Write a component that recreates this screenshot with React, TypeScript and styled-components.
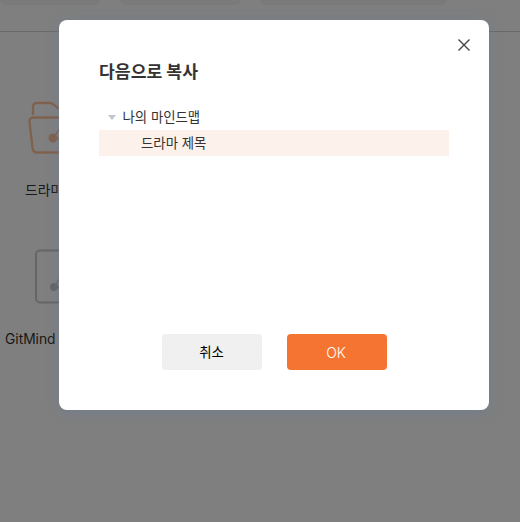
import React from "react";
import styled, { createGlobalStyle } from "styled-components";

const GlobalStyle = createGlobalStyle`
  * { box-sizing: border-box; }
  body { margin: 0; overflow: hidden; background: #fff; }
  button { font: inherit; border: 0; padding: 0; cursor: pointer; }
`;

const Screen = styled.div`
  position: relative;
  width: 520px;
  height: 522px;
  overflow: hidden;
  font-family: Inter, "Noto Sans CJK KR", sans-serif;
  font-size: 13.4px;
  color: #333;
`;

const Toolbar = styled.header`
  display: flex;
  height: 32px;
  border-bottom: 1px solid #d2d4da;
`;

const Chip = styled.div<{ $width: number; $gap: number }>`
  width: ${(p) => p.$width}px;
  height: 5px;
  margin-right: ${(p) => p.$gap}px;
  background: #f5f5f5;
  border-radius: 0 0 5px 5px;
`;

const Files = styled.main`
  display: flex;
  flex-direction: column;
  padding-top: 64px;
`;

const FileItem = styled.div`
  display: flex;
  flex-direction: column;
  width: 124px;
  height: 149px;
`;

const FileArt = styled.svg`
  display: block;
  width: 72px;
  height: 64px;
  margin-left: 26px;
  flex: none;
`;

const FileName = styled.span<{ $indent: number }>`
  margin-top: 20px;
  padding-left: ${(p) => p.$indent}px;
  font-size: 13.8px;
  line-height: 20px;
  white-space: nowrap;
`;

const Backdrop = styled.div`
  position: absolute;
  inset: 0;
  display: flex;
  align-items: flex-start;
  padding: 20px 0 0 59px;
  background: rgba(0, 0, 0, 0.5);
`;

const Dialog = styled.section`
  display: flex;
  flex-direction: column;
  width: 430px;
  height: 390px;
  padding: 16px 40px 40px;
  border-radius: 8px;
  background: #fff;
  box-shadow: 0 2px 12px rgba(97, 124, 166, 0.4);
`;

const CloseButton = styled.button`
  display: grid;
  place-items: center;
  align-self: flex-end;
  width: 18px;
  height: 18px;
  margin-right: -24px;
  background: transparent;
`;

const Title = styled.h1`
  margin: 5px 0 0;
  font-size: 17.2px;
  line-height: 26px;
  font-weight: 700;
  color: #333;
`;

const Tree = styled.div`
  flex: 1;
  margin-top: 19px;
`;

const TreeRow = styled.div<{ $selected?: boolean }>`
  display: flex;
  align-items: center;
  gap: 7px;
  height: 26px;
  padding-left: ${(p) => (p.$selected ? 42 : 8.5)}px;
  background: ${(p) => (p.$selected ? "#fdf1ec" : "transparent")};
`;

const TreeLabel = styled.span`
  line-height: 26px;
`;

const Actions = styled.footer`
  display: flex;
  gap: 25px;
  padding-left: 63px;
`;

const Action = styled.button<{ $primary?: boolean }>`
  width: 100px;
  height: 36px;
  padding: ${(p) => (p.$primary ? "0 2px 0 0" : "0 1px 2px 0")};
  border-radius: 4px;
  font-size: ${(p) => (p.$primary ? 14 : 13.4)}px;
  font-weight: ${(p) => (p.$primary ? 300 : 400)};
  color: ${(p) => (p.$primary ? "#fff" : "#000")};
  background: ${(p) => (p.$primary ? "#f67431" : "#f0f0f0")};
`;

const FolderArt = () => (
  <FileArt viewBox="0 0 72 64" fill="none" stroke="#ffc39c" strokeWidth="2.3" strokeLinecap="round" strokeLinejoin="round">
    <path d="M7 18V11Q7 7 11 7H24Q26 7 28 9L32 12Q33 13 36 13H57Q61 13 61 18" />
    <path d="M8 21.5H62Q66 21.5 65.5 26L63 52Q62.5 56.5 58 56.5H11Q7 56.5 6.5 52L3.5 26Q3 21.5 8 21.5Z" />
    <path d="M27 42L36 30L46 44M27 42L46 44" strokeWidth="1.4" />
    <circle cx="27" cy="42" r="4.5" fill="#ffc39c" stroke="none" />
    <circle cx="46" cy="44" r="4" fill="#ffc39c" stroke="none" />
  </FileArt>
);

const MapArt = () => (
  <FileArt viewBox="0 0 72 64" fill="none" stroke="#cacaca" strokeWidth="2">
    <rect x="10" y="5.5" width="52" height="52" rx="4" />
    <path d="M28 42L36 30L46 44M28 42L46 44" strokeWidth="1.2" />
    <circle cx="28" cy="42" r="4" fill="#cacaca" stroke="none" />
    <circle cx="46" cy="44" r="4" fill="#cacaca" stroke="none" />
  </FileArt>
);

export default function App() {
  return (
    <>
      <GlobalStyle />
      <Screen>
        <Toolbar>
          <Chip $width={100} $gap={20} />
          <Chip $width={121} $gap={19} />
          <Chip $width={187} $gap={0} />
        </Toolbar>
        <Files>
          <FileItem>
            <FolderArt />
            <FileName $indent={25}>드라마 제목</FileName>
          </FileItem>
          <FileItem>
            <MapArt />
            <FileName $indent={5}>GitMind 마인드맵</FileName>
          </FileItem>
        </Files>
        <Backdrop>
          <Dialog role="dialog" aria-modal="true" aria-labelledby="copy-title">
            <CloseButton aria-label="닫기">
              <svg width="12" height="12" viewBox="0 0 12 12" stroke="#444" strokeWidth="1.4">
                <path d="M.5.5l11 11M11.5.5l-11 11" />
              </svg>
            </CloseButton>
            <Title id="copy-title">다음으로 복사</Title>
            <Tree role="tree">
              <TreeRow role="treeitem">
                <svg width="8" height="5" viewBox="0 0 8 5" fill="#c0c4cc">
                  <path d="M0 0h8L4 5z" />
                </svg>
                <TreeLabel>나의 마인드맵</TreeLabel>
              </TreeRow>
              <TreeRow role="treeitem" $selected>
                <TreeLabel>드라마 제목</TreeLabel>
              </TreeRow>
            </Tree>
            <Actions>
              <Action>취소</Action>
              <Action $primary>OK</Action>
            </Actions>
          </Dialog>
        </Backdrop>
      </Screen>
    </>
  );
}
